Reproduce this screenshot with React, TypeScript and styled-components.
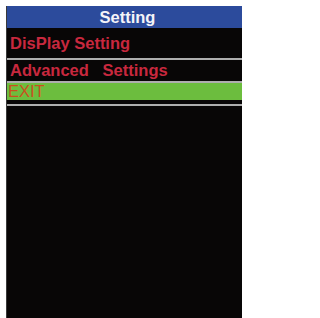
import React from "react";
import styled, { createGlobalStyle } from "styled-components";

const GlobalStyle = createGlobalStyle`
  html, body {
    margin: 0;
    padding: 0;
    background: #ffffff;
    font-family: "Liberation Sans", Arial, sans-serif;
  }
`;

const Page = styled.div`
  width: 250px;
  height: 318px;
  padding: 6px 8px 0 6px;
  box-sizing: border-box;
  background: #ffffff;
  display: flex;
`;

const Screen = styled.div`
  flex: 1;
  display: flex;
  flex-direction: column;
  background: #080606;
  border-left: 1px solid #3a3a3a;
`;

const TitleBar = styled.div`
  height: 22px;
  display: flex;
  align-items: center;
  justify-content: center;
  padding-left: 6px;
  background: #2c4b9c;
  color: #f4f4f8;
  font-size: 16.5px;
  font-weight: bold;
`;

const MenuItem = styled.div<{ $height: number; $active?: boolean; $indent?: number }>`
  height: ${(p) => p.$height}px;
  display: flex;
  align-items: center;
  padding-left: ${(p) => p.$indent ?? 3}px;
  background: ${(p) => (p.$active ? "#6cbd3e" : "#080606")};
  color: ${(p) => (p.$active ? "#c9501e" : "#c8283e")};
  font-size: 16.5px;
  font-weight: ${(p) => (p.$active ? "normal" : "bold")};
  white-space: pre;
`;

const Divider = styled.div<{ $gapAbove?: number }>`
  height: 2px;
  margin-top: ${(p) => p.$gapAbove ?? 0}px;
  background: #aeaeae;
`;

export default function App() {
  return (
    <>
      <GlobalStyle />
      <Page>
        <Screen>
          <TitleBar>Setting</TitleBar>
          <MenuItem $height={30}>DisPlay Setting</MenuItem>
          <Divider />
          <MenuItem $height={21}>{"Advanced   Settings"}</MenuItem>
          <Divider />
          <MenuItem $height={17} $active $indent={1}>
            EXIT
          </MenuItem>
          <Divider $gapAbove={4} />
        </Screen>
      </Page>
    </>
  );
}
